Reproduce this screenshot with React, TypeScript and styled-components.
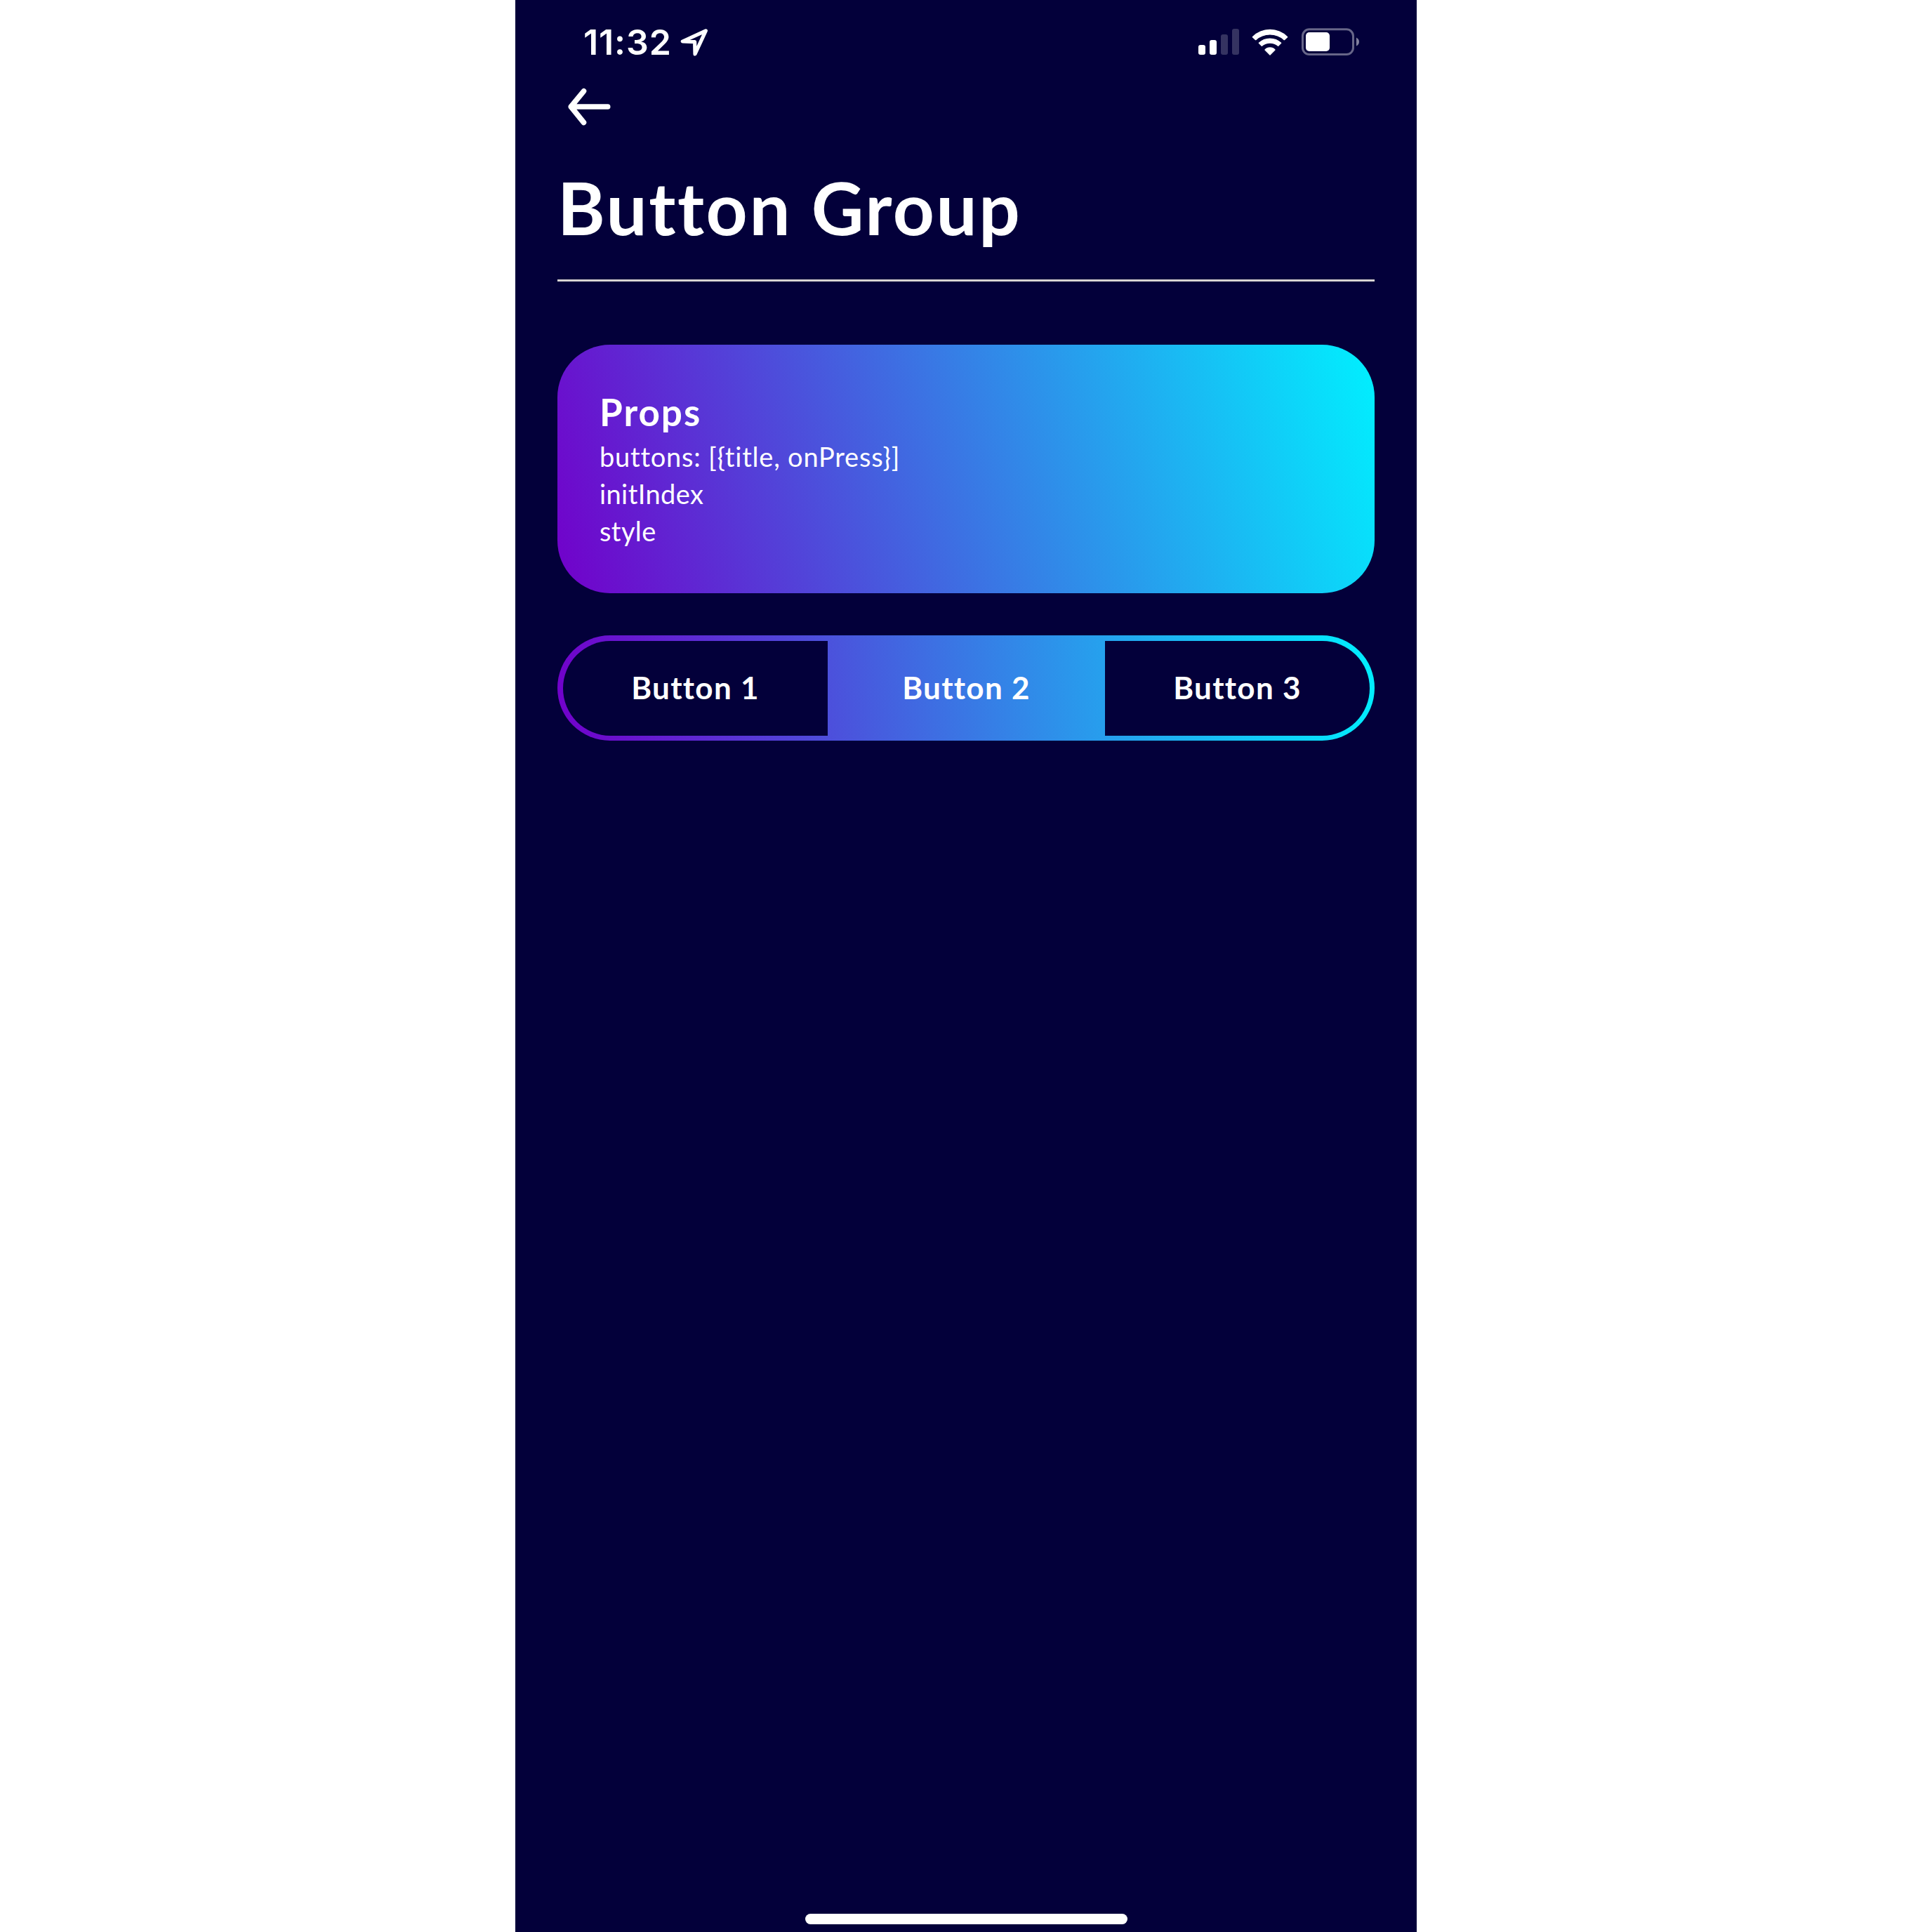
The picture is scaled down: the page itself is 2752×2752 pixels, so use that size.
import React, { useState } from "react";
import styled, { createGlobalStyle } from "styled-components";

const NAVY = "#03003a";
const PURPLE = "#7200ca";
const CYAN = "#00f0ff";

const GlobalStyle = createGlobalStyle`
  body {
    margin: 0;
    background: #fff;
  }
  *, *::before, *::after {
    box-sizing: border-box;
  }
`;

const Page = styled.div`
  display: flex;
  justify-content: center;
  height: 2752px;
`;

const Screen = styled.main`
  display: flex;
  flex-direction: column;
  width: 1284px;
  background: ${NAVY};
  color: #fff;
  font-family: Lato, "Open Sans", sans-serif;
`;

const StatusBar = styled.header`
  display: flex;
  justify-content: space-between;
  height: 120px;
  padding: 30px 82px 0 97px;
`;

const Clock = styled.div`
  display: flex;
  align-items: flex-start;
  gap: 10px;
`;

const Time = styled.span`
  width: 124px;
  font: 600 50px/60px Inter, sans-serif;
  letter-spacing: 0.9px;
  white-space: nowrap;
`;

const LocationIcon = styled.svg`
  width: 47px;
  height: 45px;
  margin-top: 8px;
`;

const Indicators = styled.div`
  display: flex;
  align-items: flex-start;
  gap: 18px;
  padding-top: 10px;
`;

const NavBar = styled.nav`
  height: 112px;
  padding: 0 71px;
`;

const BackButton = styled.button`
  display: flex;
  padding: 0;
  border: 0;
  background: none;
  color: inherit;
`;

const Content = styled.section`
  display: flex;
  flex: 1;
  flex-direction: column;
  padding: 0 60px;
`;

const Title = styled.h1`
  height: 169px;
  margin: 0 0 90px;
  border-bottom: 3px solid #d8d4d2;
  font-size: 103px;
  font-weight: 700;
  line-height: 126px;
  letter-spacing: 2.6px;
  white-space: nowrap;
`;

const PropsCard = styled.article`
  height: 354px;
  padding: 60px;
  border-radius: 75px;
  background: linear-gradient(73.1deg, ${PURPLE}, ${CYAN});
`;

const CardTitle = styled.h2`
  margin: 0 0 1px;
  font-size: 53px;
  font-weight: 700;
  line-height: 72px;
  letter-spacing: 2px;
`;

const PropLine = styled.p<{ $tracking: number }>`
  margin: 0;
  font-size: 38px;
  line-height: 53.2px;
  letter-spacing: ${(p) => p.$tracking}px;
  white-space: nowrap;
`;

const Group = styled.div`
  display: grid;
  grid-template-columns: 377px 395px 377px;
  height: 150px;
  margin-top: 60px;
  padding: 8px 7px 7px 8px;
  border-radius: 75px;
  background: linear-gradient(82.66deg, ${PURPLE}, ${CYAN});
`;

const GroupButton = styled.button<{ $selected: boolean }>`
  padding: 0 0 3px;
  border: 0;
  background: ${(p) => (p.$selected ? "transparent" : NAVY)};
  color: #fff;
  font: 700 44px/60px Lato, "Open Sans", sans-serif;
  letter-spacing: 1.3px;

  &:first-child {
    border-radius: 68px 0 0 68px;
  }
  &:last-child {
    border-radius: 0 68px 68px 0;
  }
`;

const HomeIndicator = styled.div`
  align-self: center;
  width: 459px;
  height: 15px;
  margin: 0 0 11px 1px;
  border-radius: 8px;
  background: #fff;
`;

const propLines = [
  { text: "buttons: [{title, onPress}]", tracking: 0.78 },
  { text: "initIndex", tracking: 0.4 },
  { text: "style", tracking: 0.4 },
];

const buttons = ["Button 1", "Button 2", "Button 3"];

const signalBars = [
  { x: 0, y: 24, opacity: 1 },
  { x: 16, y: 17, opacity: 1 },
  { x: 32, y: 9, opacity: 0.2 },
  { x: 48, y: 1, opacity: 0.2 },
];

function Signal() {
  return (
    <svg width="58" height="40" viewBox="0 0 58 40">
      {signalBars.map((b) => (
        <rect key={b.x} x={b.x} y={b.y} width="10" height={38 - b.y} rx="3" fill="#fff" fillOpacity={b.opacity} />
      ))}
    </svg>
  );
}

function Wifi() {
  return (
    <svg width="52" height="40" viewBox="-78 -117 156 120">
      <g fill="#fff" stroke="#fff" strokeWidth="4" strokeLinejoin="round">
        <path d="M-74 -79A104 104 0 0 1 74 -79L61 -67A92 92 0 0 0 -61 -67Z" />
        <path d="M-47 -53A68 68 0 0 1 47 -53L35 -41A54 54 0 0 0 -35 -41Z" />
        <path d="M-21 -24A29 29 0 0 1 21 -24L0 -3Z" />
      </g>
    </svg>
  );
}

function Battery() {
  return (
    <svg width="83" height="40" viewBox="0 0 83 40">
      <rect x="2.5" y="1.8" width="72" height="35.7" rx="9.5" fill="none" stroke="#fff" strokeOpacity="0.4" strokeWidth="3" />
      <rect x="7" y="6" width="34" height="27" rx="5" fill="#fff" />
      <path d="M79 13.5Q83 15.5 83 19.5T79 25.5Z" fill="#fff" fillOpacity="0.5" />
    </svg>
  );
}

export default function App() {
  const [selected, setSelected] = useState(1);

  return (
    <>
      <GlobalStyle />
      <Page>
        <Screen>
          <StatusBar>
            <Clock>
              <Time>11:32</Time>
              <LocationIcon viewBox="0 0 47 45">
                <path d="M40.3 5.9L7.3 21L24.6 21.6L25 39Z" fill="none" stroke="#fff" strokeWidth="5.2" strokeLinejoin="round" />
              </LocationIcon>
            </Clock>
            <Indicators>
              <Signal />
              <Wifi />
              <Battery />
            </Indicators>
          </StatusBar>
          <NavBar>
            <BackButton aria-label="Back">
              <svg width="70" height="64" viewBox="0 0 70 64" fill="none" stroke="#fff" strokeWidth="7.6" strokeLinecap="round" strokeLinejoin="round">
                <path d="M60.7 32H8.3M26.5 9.8L8.3 32L26.5 54.5" />
              </svg>
            </BackButton>
          </NavBar>
          <Content>
            <Title>Button Group</Title>
            <PropsCard>
              <CardTitle>Props</CardTitle>
              {propLines.map((line) => (
                <PropLine key={line.text} $tracking={line.tracking}>
                  {line.text}
                </PropLine>
              ))}
            </PropsCard>
            <Group>
              {buttons.map((title, i) => (
                <GroupButton key={title} $selected={i === selected} onClick={() => setSelected(i)}>
                  {title}
                </GroupButton>
              ))}
            </Group>
          </Content>
          <HomeIndicator />
        </Screen>
      </Page>
    </>
  );
}
